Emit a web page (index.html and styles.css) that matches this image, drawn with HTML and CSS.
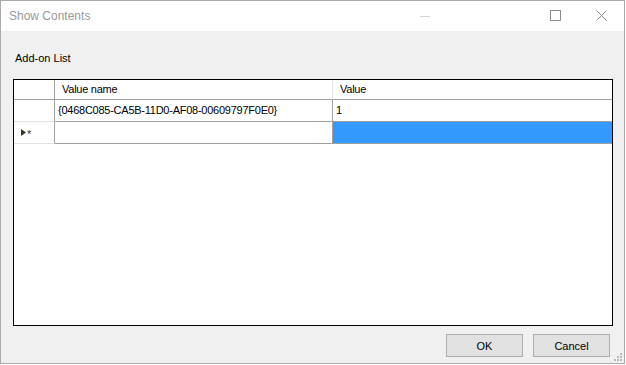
FILE: index.html
```html
<!DOCTYPE html>
<html lang="en">
<head>
    <meta charset="UTF-8">
    <title>Show Contents</title>
    <link rel="stylesheet" href="styles.css">
</head>
<body>
    <div class="window">
        <div class="titlebar">
            <span class="title">Show Contents</span>
            <div class="caption-buttons">
                <span class="cap-btn minimize">
                    <svg width="10" height="10" viewBox="0 0 10 10"><line x1="0" y1="5.5" x2="10" y2="5.5" stroke="#d4d4d4" stroke-width="1"/></svg>
                </span>
                <span class="cap-btn">
                    <svg width="11" height="11" viewBox="0 0 11 11"><rect x="0.5" y="0.5" width="10" height="10" fill="none" stroke="#8c8c8c" stroke-width="1"/></svg>
                </span>
                <span class="cap-btn">
                    <svg width="11" height="11" viewBox="0 0 11 11"><path d="M0.5 0.5 L10.5 10.5 M10.5 0.5 L0.5 10.5" stroke="#8c8c8c" stroke-width="1"/></svg>
                </span>
            </div>
        </div>

        <div class="content">
            <div class="list-label">Add-on List</div>

            <div class="grid">
                <div class="row header-row">
                    <div class="cell row-head"></div>
                    <div class="cell name">Value name</div>
                    <div class="cell value">Value</div>
                </div>
                <div class="row data-row">
                    <div class="cell row-head"></div>
                    <div class="cell name">{0468C085-CA5B-11D0-AF08-00609797F0E0}</div>
                    <div class="cell value">1</div>
                </div>
                <div class="row data-row new-row">
                    <div class="cell row-head">
                        <svg width="5" height="7" viewBox="0 0 5 7"><path d="M0 0 L5 3.5 L0 7 Z" fill="#333"/></svg><span class="star">*</span>
                    </div>
                    <div class="cell name"></div>
                    <div class="cell value selected"></div>
                </div>
            </div>

            <div class="actions">
                <button type="button">OK</button>
                <button type="button">Cancel</button>
            </div>
            <svg class="grip" width="9" height="9" viewBox="0 0 9 9">
                <rect x="7" y="1" width="2" height="2" fill="#bcbcbc"/>
                <rect x="4" y="4" width="2" height="2" fill="#bcbcbc"/>
                <rect x="7" y="4" width="2" height="2" fill="#bcbcbc"/>
                <rect x="1" y="7" width="2" height="2" fill="#bcbcbc"/>
                <rect x="4" y="7" width="2" height="2" fill="#bcbcbc"/>
                <rect x="7" y="7" width="2" height="2" fill="#bcbcbc"/>
            </svg>
        </div>
    </div>
</body>
</html>
```

FILE: styles.css
```css
body {
    margin: 0;
    background-color: #ffffff;
    font-family: "Liberation Sans", Arial, sans-serif;
    font-size: 11px;
    color: #000;
}
.window {
    width: 623px;
    height: 362px;
    border: 1px solid #ababab;
    background-color: #f0f0f0;
    display: flex;
    flex-direction: column;
}
.titlebar {
    height: 30px;
    background-color: #ffffff;
    display: flex;
    align-items: center;
    justify-content: space-between;
}
.title {
    margin-left: 8px;
    margin-top: -1px;
    font-size: 12px;
    color: #9a9a9a;
}
.caption-buttons {
    display: flex;
    align-items: center;
    margin-top: -1px;
}
.cap-btn {
    width: 46px;
    display: flex;
    justify-content: center;
    align-items: center;
}
.cap-btn.minimize {
    margin-right: 84px;
}
.content {
    flex: 1;
    position: relative;
    padding: 21px 11px 0 12px;
}
.list-label {
    height: 13px;
    line-height: 13px;
    margin-left: 2px;
}
.grid {
    margin-top: 14px;
    width: 598px;
    height: 245px;
    border: 1px solid #000;
    background-color: #ffffff;
}
.row {
    display: flex;
}
.cell {
    box-sizing: border-box;
    line-height: 19px;
    white-space: nowrap;
    overflow: hidden;
    letter-spacing: -0.25px;
}
.row-head {
    width: 41px;
    border-right: 1px solid #a0a0a0;
    border-bottom: 1px solid #e3e3e3;
    display: flex;
    align-items: center;
    padding-left: 7px;
}
.name {
    width: 278px;
    border-right: 1px solid #a0a0a0;
    border-bottom: 1px solid #a0a0a0;
    padding-left: 3px;
}
.value {
    width: 279px;
    border-bottom: 1px solid #a0a0a0;
    padding-left: 3px;
}
.header-row .cell {
    height: 20px;
    border-bottom-color: #a0a0a0;
}
.header-row .name {
    padding-left: 7px;
    border-right-color: #e3e3e3;
}
.header-row .value {
    padding-left: 7px;
}
.data-row .cell {
    height: 22px;
    line-height: 21px;
}
.selected {
    background-color: #3399ff;
}
.star {
    margin-left: 1px;
    font-size: 11px;
    color: #333;
    line-height: 11px;
    margin-top: 3px;
}
.actions {
    display: flex;
    justify-content: flex-end;
    gap: 10px;
    margin-top: 8px;
    margin-right: 3px;
}
button {
    width: 77px;
    height: 23px;
    background-color: #e1e1e1;
    border: 1px solid #adadad;
    font-family: "Liberation Sans", Arial, sans-serif;
    font-size: 11px;
    color: #000;
    padding: 0;
}
.grip {
    position: absolute;
    right: 2px;
    bottom: 2px;
}
```
